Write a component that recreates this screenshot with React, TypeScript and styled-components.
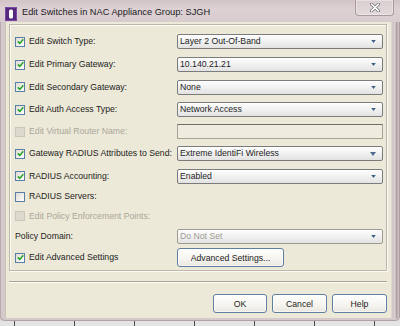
import React from "react";
import styled, { createGlobalStyle, css } from "styled-components";

const Global = createGlobalStyle`
  html, body { margin: 0; padding: 0; }
  body {
    width: 400px; height: 326px; overflow: hidden;
    background: #dcdcdc;
    font-family: "Liberation Sans", Arial, sans-serif;
  }
`;

const Frame = styled.div`
  width: 400px;
  height: 321px;
  display: flex;
  flex-direction: column;
  background: #d6c9cb;
  border-radius: 0 0 5px 5px;
  box-shadow: inset 1px 0 0 #b9aaad, inset 0 -1px 0 #b0a2a5;
  overflow: hidden;
`;

const TitleBar = styled.div`
  height: 22px;
  flex: none;
  display: flex;
  align-items: flex-start;
  padding-left: 5px;
  background: linear-gradient(to bottom, #d2c3c6 0%, #ddd1d3 40%, #d9cccf 100%);
`;

const TitleIcon = styled.svg`
  margin-top: 7px;
  flex: none;
`;

const TitleText = styled.div`
  margin-left: 5px;
  margin-top: 6px;
  font-size: 9.25px;
  line-height: 12px;
  color: #20201e;
  white-space: nowrap;
  flex: 1;
`;

const CloseBtn = styled.div`
  width: 37px;
  height: 15px;
  margin-right: 6px;
  flex: none;
  display: flex;
  align-items: center;
  justify-content: center;
  border: 1px solid #a99a9e;
  border-top: none;
  border-radius: 0 0 4px 4px;
  background: linear-gradient(to bottom, #d9cdd0, #e3d9db);
  box-shadow: inset 0 0 0 1px rgba(255,255,255,0.35);
`;

const BodyRow = styled.div`
  flex: 1;
  display: flex;
  padding: 0 0 3px 5px;
`;

const RightEdge = styled.div`
  width: 9px;
  flex: none;
  background: linear-gradient(to right, #e4dfd2 0%, #cbbfc1 25%, #e0d6d8 45%, #a8989c 60%, #d3c6c9 80%, #9c8e91 100%);
`;

const Client = styled.div`
  flex: 1;
  background: #ece9d8;
  display: flex;
  flex-direction: column;
  padding: 2px 4px 5px 4px;
  box-shadow: inset 1px 0 0 #c8c3b3;
`;

const Group = styled.div`
  border: 1px solid #bdb9a8;
  box-shadow: inset 1px 1px 0 #fbfaf4, 1px 1px 0 #fbfaf4;
  padding: 5px 3px 1px 5px;
  display: flex;
  flex-direction: column;
`;

const Row = styled.div<{ $h: number }>`
  height: ${(p) => p.$h}px;
  display: grid;
  grid-template-columns: 162px 1fr;
  align-items: center;
`;

const LabelCell = styled.div`
  display: flex;
  align-items: center;
  gap: 4px;
  min-width: 0;
`;

const Label = styled.span<{ $disabled?: boolean }>`
  font-size: 8.7px;
  line-height: 11px;
  white-space: nowrap;
  color: ${(p) => (p.$disabled ? "#aaa79b" : "#1c1c1c")};
`;

const CheckBox = styled.div<{ $disabled?: boolean }>`
  width: 8px;
  height: 8px;
  flex: none;
  display: flex;
  align-items: center;
  justify-content: center;
  ${(p) =>
    p.$disabled
      ? css`
          border: 1px solid #c9c6ba;
          background: #dcd9ce;
        `
      : css`
          border: 1px solid #5a7ea6;
          background: linear-gradient(135deg, #dedcd4, #ffffff);
        `}
`;

const Combo = styled.div<{ $disabled?: boolean }>`
  height: 13px;
  display: flex;
  align-items: center;
  padding: 0 6px 0 2px;
  border: 1px solid ${(p) => (p.$disabled ? "#9d9b92" : "#7b7b7b")};
  border-radius: 2px;
  background: linear-gradient(to bottom, #fdfdfd 0%, #f1f1f1 50%, #e2e2e2 100%);
  box-shadow: inset 0 1px 0 #ffffff;
`;

const ComboText = styled.span<{ $disabled?: boolean }>`
  flex: 1;
  font-size: 8.7px;
  line-height: 11px;
  white-space: nowrap;
  color: ${(p) => (p.$disabled ? "#9e9c94" : "#1c1c1c")};
`;

const TextField = styled.div`
  height: 13px;
  border: 1px solid #a6a395;
  border-top-color: #6f6e68;
  background: #eeebdf;
`;

const PushButton = styled.div<{ $w: number }>`
  width: ${(p) => p.$w}px;
  height: 17px;
  flex: none;
  display: flex;
  align-items: center;
  justify-content: center;
  border: 1px solid #5f7fa2;
  border-radius: 3px;
  background: linear-gradient(to bottom, #fefefd 0%, #f5f4ef 60%, #e9e7df 100%);
  box-shadow: inset 0 0 0 1px rgba(255,255,255,0.6);
  font-size: 8.7px;
  color: #1c1c1c;
  white-space: nowrap;
`;

const Separator = styled.div`
  margin-top: 10px;
  height: 1px;
  background: #a9a697;
  border-bottom: 1px solid #fbfaf5;
`;

const ButtonBar = styled.div`
  margin-top: 11px;
  display: flex;
  justify-content: flex-end;
  gap: 5px;
  padding-right: 0;
`;

const DesktopStrip = styled.div`
  height: 5px;
  background: repeating-linear-gradient(to right, #e4e4e4 0px, #e4e4e4 14px, #4a4a4a 14px, #4a4a4a 15px, #e4e4e4 15px, #e4e4e4 60px);
`;

const Check = () => (
  <svg width="7" height="7" viewBox="0 0 7 7">
    <path d="M0.8 3.4 L2.8 5.4 L6.3 1.2" stroke="#23a323" strokeWidth="1.5" fill="none" />
  </svg>
);

const Arrow = ({ big }: { big?: boolean }) => (
  <svg width={big ? 6 : 5} height={big ? 4 : 3} viewBox="0 0 6 4">
    <path d="M0 0 H6 L3 4 Z" fill={big ? "#4d6c8f" : "#3e5d86"} />
  </svg>
);

type Ctrl =
  | { kind: "combo"; text: string; disabled?: boolean; big?: boolean }
  | { kind: "field" }
  | { kind: "button"; text: string }
  | { kind: "none" };

type RowDef = {
  label: string;
  cb: "on" | "off" | "dis" | "none";
  ctrl: Ctrl;
  h: number;
};

const rows: RowDef[] = [
  { label: "Edit Switch Type:", cb: "on", ctrl: { kind: "combo", text: "Layer 2 Out-Of-Band" }, h: 23 },
  { label: "Edit Primary Gateway:", cb: "on", ctrl: { kind: "combo", text: "10.140.21.21" }, h: 23 },
  { label: "Edit Secondary Gateway:", cb: "on", ctrl: { kind: "combo", text: "None" }, h: 22 },
  { label: "Edit Auth Access Type:", cb: "on", ctrl: { kind: "combo", text: "Network Access" }, h: 23 },
  { label: "Edit Virtual Router Name:", cb: "dis", ctrl: { kind: "field" }, h: 21 },
  { label: "Gateway RADIUS Attributes to Send:", cb: "on", ctrl: { kind: "combo", text: "Extreme IdentiFi Wireless", big: true }, h: 23 },
  { label: "RADIUS Accounting:", cb: "on", ctrl: { kind: "combo", text: "Enabled" }, h: 22 },
  { label: "RADIUS Servers:", cb: "off", ctrl: { kind: "none" }, h: 19 },
  { label: "Edit Policy Enforcement Points:", cb: "dis", ctrl: { kind: "none" }, h: 20 },
  { label: "Policy Domain:", cb: "none", ctrl: { kind: "combo", text: "Do Not Set", disabled: true }, h: 20 },
  { label: "Edit Advanced Settings", cb: "on", ctrl: { kind: "button", text: "Advanced Settings..." }, h: 23 },
];

const renderCtrl = (c: Ctrl) => {
  switch (c.kind) {
    case "combo":
      return (
        <Combo $disabled={c.disabled}>
          <ComboText $disabled={c.disabled}>{c.text}</ComboText>
          <Arrow big={c.big} />
        </Combo>
      );
    case "field":
      return <TextField />;
    case "button":
      return <PushButton $w={105}>{c.text}</PushButton>;
    default:
      return <div />;
  }
};

export default function App() {
  return (
    <>
      <Global />
      <Frame>
        <TitleBar>
          <TitleIcon width="12" height="14" viewBox="0 0 12 14">
            <rect x="0" y="0" width="12" height="14" rx="1" fill="#56297f" />
            <rect x="0.5" y="0.5" width="11" height="13" rx="1" fill="none" stroke="#7b4aa6" strokeWidth="1" />
            <rect x="4" y="2.5" width="4" height="9" rx="1.6" fill="#ffffff" />
          </TitleIcon>
          <TitleText>Edit Switches in NAC Appliance Group: SJGH</TitleText>
          <CloseBtn>
            <svg width="10" height="9" viewBox="0 0 10 9">
              <path d="M1.5 1.2 L8.5 7.8 M8.5 1.2 L1.5 7.8" stroke="#6d6a72" strokeWidth="3" strokeLinecap="round" />
              <path d="M1.5 1.2 L8.5 7.8 M8.5 1.2 L1.5 7.8" stroke="#ffffff" strokeWidth="1.6" strokeLinecap="round" />
            </svg>
          </CloseBtn>
        </TitleBar>
        <BodyRow>
          <Client>
            <Group>
              {rows.map((r) => (
                <Row key={r.label} $h={r.h}>
                  <LabelCell>
                    {r.cb !== "none" && (
                      <CheckBox $disabled={r.cb === "dis"}>{r.cb === "on" && <Check />}</CheckBox>
                    )}
                    <Label $disabled={r.cb === "dis"}>{r.label}</Label>
                  </LabelCell>
                  {renderCtrl(r.ctrl)}
                </Row>
              ))}
            </Group>
            <Separator />
            <ButtonBar>
              <PushButton $w={52}>OK</PushButton>
              <PushButton $w={53}>Cancel</PushButton>
              <PushButton $w={53}>Help</PushButton>
            </ButtonBar>
          </Client>
          <RightEdge />
        </BodyRow>
      </Frame>
      <DesktopStrip />
    </>
  );
}
